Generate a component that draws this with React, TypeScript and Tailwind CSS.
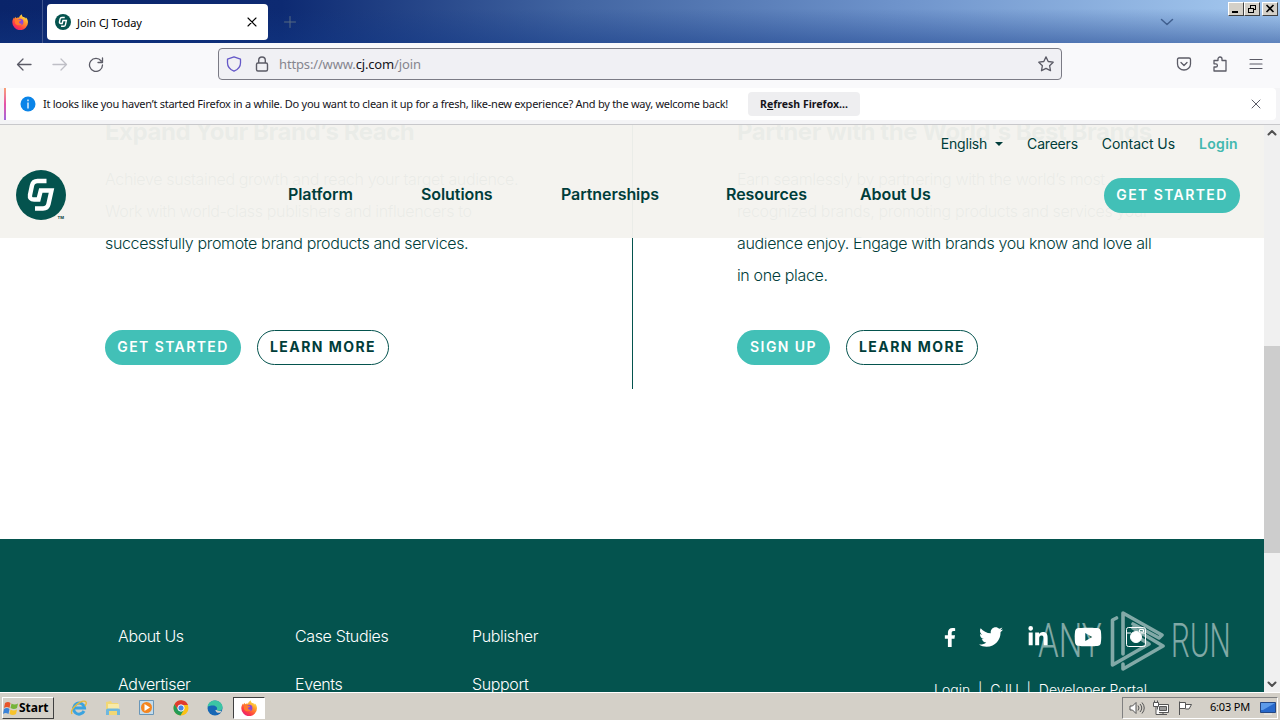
import * as React from 'react';
import { clsx } from 'clsx';
import { FaFacebookF, FaTwitter, FaLinkedinIn, FaYoutube } from 'react-icons/fa';

type IconProps = { className?: string };

const Firefox = ({ className }: IconProps) => (
	<svg viewBox="0 0 16 16" className={className}>
		<defs>
			<linearGradient id="fx-flame" x1="0.85" y1="0.05" x2="0.2" y2="1">
				<stop offset="0" stopColor="#fff04d" />
				<stop offset="0.35" stopColor="#ff9a2b" />
				<stop offset="0.7" stopColor="#ff4340" />
				<stop offset="1" stopColor="#e5177d" />
			</linearGradient>
		</defs>
		<path
			d="M10 0.3c-.4 1.2.2 2 1 2.8 1-.3 1.8.3 2.5 1.3.3-.4.3-.8.2-1.2C15.2 4.600 16 6.400 16 8.300A7.800 7.800 0 0 1 .3 8.300C.3 6.200 1 4.700 2 3.400l.2 1.300c.3-.8.8-1.500 1.500-2l.3 1.500c1-.7 2-.8 3-.5C7.300 2.300 8.400 1 10 .3z"
			fill="url(#fx-flame)"
		/>
		<circle cx="8.200" cy="8" r="3.200" fill="#8a48d8" />
		<path d="M3 5.500c1.700-1 3.500-.5 4.200.3 1 0 1.800.2 2 .7-.6.700-1.700.8-2.200 1.300-.2 1.700 1.700 2.500 3.200 1.600-1 2.600-6.300 2.600-7.200-.5z" fill="#ff7a2e" />
	</svg>
);

const CjLogo = ({ className }: IconProps) => (
	<svg viewBox="0 0 50 50" className={className}>
		<circle cx="25" cy="25" r="25" fill="#04534e" />
		<path
			d="M30.500 11H21.500Q17 11 16 15.500L14 25Q13.300 29.500 18 29.500H22.500L24.800 20.500H35.500L32.500 34Q31.500 38.500 27 38.500H19"
			fill="none"
			stroke="#fff"
			strokeWidth="4.400"
		/>
	</svg>
);

const Stroke = ({
	d,
	className,
	box = '0 0 16 16',
	width = 1.2,
}: {
	d: string;
	className?: string;
	box?: string;
	width?: number;
}) => (
	<svg viewBox={box} className={className} fill="none" stroke="currentColor" strokeWidth={width} strokeLinecap="round" strokeLinejoin="round">
		<path d={d} />
	</svg>
);

const CLOSE = 'M4 4l8 8M12 4l-8 8';

const WinButton = ({ children, className }: { children: React.ReactNode; className?: string }) => (
	<div
		className={clsx(
			'h-3.5 w-4 border border-t-white border-l-white border-r-[#404040] border-b-[#404040] bg-[#d4d0c8] text-black',
			className
		)}>
		<svg viewBox="0 0 14 12" className="block h-3 w-3.5" fill="none" stroke="currentColor" shapeRendering="crispEdges">
			{children}
		</svg>
	</div>
);

const TabStrip = () => (
	<div className="flex h-[43px] shrink-0 bg-[linear-gradient(to_bottom,#ffffff00_20%,#1238857a_100%),linear-gradient(to_right,#0a246a_0%,#0d2a72_22%,#4265a2_45%,#6e93cb_70%,#a6caf0_100%)]">
		<div className="flex w-[43px] items-center border-r border-[#40568f] pl-3">
			<Firefox className="size-4" />
		</div>
		<div className="mt-1 ml-1 flex h-9 w-[221px] items-center rounded bg-white pl-2">
			<CjLogo className="size-4" />
			<span className="ml-1.5 w-[167px] pt-0.5 text-[11px] tracking-[-0.05px] text-black">Join CJ Today</span>
			<Stroke d={CLOSE} className="size-4 text-black" width={1.1} />
		</div>
		<Stroke d="M8 2.500v11M2.500 8h11" className="mt-3.5 ml-3.5 size-4 text-[#566b82]" width={1} />
		<div className="grow" />
		<Stroke d="M2.500 5.500l5.500 5 5.500-5" className="mt-3.5 mr-[53px] size-4 text-[#405f8f]" width={1.5} />
		<div className="mt-0.5 mr-[2px] flex">
			<WinButton>
				<path d="M3 9h6" strokeWidth="2" />
			</WinButton>
			<WinButton>
				<path d="M5 2h6M5.500 2v3M10.500 2v5M8 6.500h3M3 5h6M3.500 5v5M8.500 5v5M3 9.500h6" />
			</WinButton>
			<WinButton className="ml-0.5">
				<path d="M3.500 2l7 7M10.500 2l-7 7" strokeWidth="1.600" shapeRendering="auto" />
			</WinButton>
		</div>
	</div>
);

const Toolbar = () => (
	<div className="flex h-[45px] shrink-0 items-center bg-[#f9f9fb] pb-[3px] text-[#5b5b66]">
		<Stroke d="M15 8.500H1.500M7 3L1.500 8.500 7 14" className="ml-4 size-4" width={1.3} />
		<Stroke d="M1 8.500h13.500M9 3l5.500 5.500L9 14" className="ml-5 size-4 text-[#bfbfc6]" width={1.3} />
		<Stroke d="M13.200 5A6.500 6.500 0 1 0 14.500 9M14.500 2v4.500H10" className="ml-5 size-4" width={1.3} />
		<div className="ml-[114px] flex h-8 w-[844px] items-center rounded border border-[#7b7b85] bg-[#f0f0f4] px-[7px]">
			<Stroke d="M8 .8L14.500 3.200V7c0 4-2.500 6.500-6.500 8.200C4 13.500 1.500 11 1.500 7V3.200z" className="size-4 text-[#6558c8]" width={1.3} />
			<svg viewBox="0 0 16 16" className="ml-3 size-4" fill="none" stroke="currentColor" strokeWidth="1.400">
				<rect x="2.500" y="7" width="11" height="8" rx="1.500" />
				<path d="M4.700 7V4.300a3.300 3.300 0 0 1 6.600 0V7" />
			</svg>
			<span className="ml-[9px] grow pt-0.5 text-[13px] tracking-[-0.15px] text-[#85858e]">
				https://www.<span className="text-[#15141a]">cj.com</span>/join
			</span>
			<Stroke d="M8 .9l2.200 4.600 5 .7-3.600 3.500.9 5L8 12.400l-4.500 2.300.9-5L.8 6.200l5-.7z" className="size-4" width={1.3} />
		</div>
		<Stroke d="M3 2h10q1.500 0 1.500 1.500V8a6.500 6 0 0 1-13 0V3.500Q1.500 2 3 2zM5 6.500l3 3 3-3" className="ml-[114px] size-4" width={1.3} />
		<Stroke
			d="M2 4.500h4V3a2 2 0 0 1 4 0v1.500h4V15H2v-4h1.800a1.600 1.600 0 0 0 0-3.200H2z"
			className="ml-5 size-4"
			width={1.3}
		/>
		<Stroke d="M2 3.500h12M2 8h12M2 12.500h12" className="ml-5 size-4" width={1.2} />
	</div>
);

const Notice = () => (
	<div className="h-9 shrink-0 bg-[#f4f4f6] px-1">
		<div className="flex h-8 items-center rounded-r bg-white text-[11px] text-[#15141a]">
			<div className="h-full w-0.5 bg-linear-to-b from-[#f9a074] via-[#e651a7] to-[#a164dc]" />
			<svg viewBox="0 0 16 16" className="ml-3.5 size-4">
				<circle cx="8" cy="8" r="7.500" fill="#0a84e8" />
				<path d="M8 3.500v1.700M8 6.500v6" stroke="#fff" strokeWidth="1.300" />
			</svg>
			<span className="ml-[7px] w-[705px] whitespace-nowrap tracking-[-0.26px]">
				It looks like you haven’t started Firefox in a while. Do you want to clean it up for a fresh, like-new experience? And by the way, welcome back!
			</span>
			<div className="flex h-6 w-28 items-center justify-center rounded bg-[#eeeef0] pt-px text-[10.500px] font-bold whitespace-nowrap">
				R<u>e</u>fresh Firefox...
			</div>
			<div className="grow" />
			<Stroke d={CLOSE} className="mr-3 size-4 text-[#5b5b66]" width={1} />
		</div>
	</div>
);

const Pill = ({ children, outline, className }: { children: string; outline?: boolean; className?: string }) => (
	<div
		className={clsx(
			'flex h-[35px] items-center justify-center rounded-full pb-0.5 text-[14px] whitespace-nowrap',
			outline
				? 'border border-[#04534e] font-bold tracking-[1.450px] text-[#003d3a]'
				: 'bg-[#42c0b7] font-semibold tracking-[1.400px] text-white',
			className
		)}>
		{children}
	</div>
);

const Card = ({ title, lines, children, className }: { title: string; lines: string[]; children: React.ReactNode; className?: string }) => (
	<div className={clsx('h-[264px]', className)}>
		<h2 className="-mt-1.5 h-11 text-[24px] leading-[26px] font-bold tracking-[-0.46px] whitespace-nowrap">{title}</h2>
		<div className="h-[167px] text-[16px] leading-8 font-light tracking-[-0.36px] whitespace-nowrap text-[#003d3a]">
			{lines.map(line => (
				<p key={line}>{line}</p>
			))}
		</div>
		<div className="flex gap-4">{children}</div>
	</div>
);

const SiteHeader = () => (
	<header className="absolute inset-x-0 top-0 flex h-[113px] bg-[#f4f2ee]/96 text-[#003d3a]">
		<div className="relative mt-[45px] ml-4 size-[50px]">
			<CjLogo className="size-full" />
			<span className="absolute right-0.5 bottom-0 text-[4px] leading-none font-bold">TM</span>
		</div>
		<nav className="mt-[59px] ml-[222px] flex w-[816px] text-[16px] leading-5 font-semibold tracking-[-0.08px] whitespace-nowrap">
			<span className="w-[133px]">Platform</span>
			<span className="w-[140px]">Solutions</span>
			<span className="w-[165px]">Partnerships</span>
			<span className="w-[134px]">Resources</span>
			<span>About Us</span>
		</nav>
		<div className="absolute top-[9px] right-[26px] flex items-center text-[14px] leading-5 whitespace-nowrap">
			<span className="tracking-[-0.2px]">English</span>
			<i className="mr-6 ml-2 border-x-4 border-t-4 border-x-transparent" />
			<span className="mr-6 tracking-[-0.2px]">Careers</span>
			<span className="mr-6 tracking-[-0.05px]">Contact Us</span>
			<span className="font-semibold tracking-[0.3px] text-[#42b8af]">Login</span>
		</div>
		<Pill className="mt-[53px] w-[136px]">GET STARTED</Pill>
	</header>
);

const links = [
	['About Us', 'Advertiser'],
	['Case Studies', 'Events'],
	['Publisher', 'Support'],
];

const Watermark = ({ className }: IconProps) => (
	<div className={clsx("flex items-center font-['Roboto',sans-serif] text-[48px] leading-none text-white/50", className)}>
		<span className="w-[71px] origin-left scale-x-[0.690]">ANY</span>
		<svg viewBox="0 0 56 64" className="h-16 w-14 shrink-0" fill="none" stroke="currentColor" strokeWidth="3.600" strokeLinecap="round" strokeLinejoin="round">
			<path d="M7.500 9L3.500 11V56L40 35 24 25M14 45V4L53 26 50 29 24 15M14 55V60L54 37 24 19" />
		</svg>
		<span className="ml-1.5 w-[60px] origin-left scale-x-[0.620]">RUN</span>
	</div>
);

const Footer = () => (
	<footer className="relative flex h-[153px] bg-[#04534e] pt-[81px] pl-[118px] font-light text-white">
		{links.map(col => (
			<div key={col[0]} className="w-[177px] text-[16px] leading-8 tracking-[-0.36px] whitespace-nowrap">
				{col.map(item => (
					<p key={item} className="mb-4">
						{item}
					</p>
				))}
			</div>
		))}
		<div className="ml-[285px] w-[213px]">
			<div className="mt-[5px] flex h-6 items-center">
				<FaFacebookF className="ml-2.5 h-[21px] w-3" />
				<FaTwitter className="ml-[23px] size-6" />
				<FaLinkedinIn className="ml-6 size-[22px]" />
				<FaYoutube className="ml-[25px] size-7" />
				<svg viewBox="0 0 20 20" className="ml-6 size-5" fill="none" stroke="currentColor">
					<rect x=".5" y=".5" width="19" height="19" rx="2" />
					<path d="M1 6h4M15 6h4M13.500 2.500h4v2.500h-4z" />
					<circle cx="10" cy="10" r="5.500" fill="currentColor" />
				</svg>
			</div>
			<p className="mt-[31px] text-[14px] leading-5 whitespace-pre">Login  |  CJU  |  Developer Portal</p>
		</div>
		<Watermark className="absolute top-[70px] left-[1038px]" />
	</footer>
);

const Scrollbar = () => (
	<div className="flex w-4 flex-col items-center justify-between bg-[#f0f0f0] text-[#505050]">
		<Stroke d="M4.500 9.500L8 6l3.500 3.500" className="size-4" width={2} />
		<div className="mt-[81px] h-[207px] w-full bg-[#cdcdcd]" />
		<Stroke d="M4.500 6.500L8 10l3.500-3.500" className="size-4" width={2} />
	</div>
);

const Taskbar = () => (
	<div className="flex h-7 shrink-0 items-center border-t border-white bg-[#d4d0c8] pt-0.5 text-[11px] text-black">
		<div className="ml-0.5 flex h-[22px] w-[52px] items-center border border-t-white border-l-white border-r-[#404040] border-b-[#404040] text-[12px] font-bold">
			<svg viewBox="0 0 16 16" className="size-4">
				<path d="M2 3q3-2 5.500 0L6.500 8Q4 6 1 8z" fill="#e8542a" />
				<path d="M8.500 3.500q3 2 6.500 0l-1 4.500q-3 2-6.500 0z" fill="#75b43a" />
				<path d="M1 9q3-2 5.500 0l-1 5q-3-2-5.500 0z" fill="#3a82d8" />
				<path d="M7.500 9.500q3 2 6.500 0l-1 4.500q-3 2-6.500 0z" fill="#f8c32c" />
			</svg>
			Start
		</div>
		<svg viewBox="0 0 18 18" className="ml-4 size-[18px]" fill="none">
			<path d="M14 12a5.500 5.500 0 1 1 .5-3H5" stroke="#3ba3df" strokeWidth="3" />
			<path d="M2 15C-1 10 13-1 16 3q1 1.500-1 4" stroke="#e6b93b" strokeWidth="1.300" />
		</svg>
		<svg viewBox="0 0 18 18" className="ml-4 size-[18px]">
			<path d="M2 3l5-1 1 2h6v12H2z" fill="#f1d775" />
			<path d="M4 5h11v7H4z" fill="#f8eaa8" />
			<path d="M2 16v-5q0-1.500 2-1.500h10q2 0 2 1.500v5h-3v-4H5v4z" fill="#6fb8df" />
		</svg>
		<svg viewBox="0 0 18 18" className="ml-4 size-[18px]">
			<path d="M1.500 1.500h14v14h-14z" fill="#c4dcec" stroke="#6996b8" />
			<circle cx="8.500" cy="8.500" r="5.500" fill="#f48620" />
			<path d="M6.500 5l5.500 3.500L6.500 12z" fill="#fff" />
		</svg>
		<svg viewBox="0 0 18 18" className="ml-4 size-[18px]">
			<circle cx="9" cy="9" r="7.500" fill="#fbc116" />
			<path d="M2.500 5.200A7.500 7.500 0 0 1 16 6H9l-3.400 5z" fill="#df3b2f" />
			<path d="M2.500 5.200A7.500 7.500 0 0 0 8.500 16.500L11.800 11H6z" fill="#239b56" />
			<circle cx="9" cy="9" r="3.200" fill="#4285e8" stroke="#fff" />
		</svg>
		<svg viewBox="0 0 18 18" className="ml-4 size-[18px]">
			<circle cx="9" cy="9" r="7.500" fill="#1767b5" />
			<path d="M1.500 8C2 3 6 1.500 9 1.500c5 0 8 4 7.500 7.500-.5 3-4.500 3.500-6 2 2-2-1-5-4-4.500-2 0-4 .5-5 1.500z" fill="#3cc5a4" />
			<path d="M10.500 11q2.500 1.700 5 .7l-1.200 2q-4 .8-5-2.700z" fill="#d4d0c8" />
		</svg>
		<div className="ml-[9px] flex h-[22px] w-8 items-center justify-center border border-t-[#404040] border-l-[#404040] border-r-white border-b-white bg-white">
			<Firefox className="size-4" />
		</div>
		<div className="grow" />
		<div className="mr-0.5 flex h-[22px] w-[156px] items-center border border-t-[#808080] border-l-[#808080] border-r-white border-b-white pl-1.5 text-[#555]">
			<svg viewBox="0 0 16 16" className="size-4" fill="#fff" stroke="currentColor">
				<path d="M1 6h2.500L7 2.500v11L3.500 10H1z" />
				<path d="M9 5.500q2 2.500 0 5M11 4q3.500 4 0 8M13 2.500q4.500 5.500 0 11" fill="none" />
			</svg>
			<svg viewBox="0 0 16 16" className="ml-2 size-4" fill="#fff" stroke="currentColor">
				<path d="M4.500 4.500h11v8h-11z" />
				<path d="M6.500 6.500h7v4h-7z" fill="#999" />
				<path d="M7 14.500h7M10 12.500v2M.5 2.500h5v4h-5zM3 6.500v8h4M1.500.5v2M4.500.5v2" />
			</svg>
			<svg viewBox="0 0 16 16" className="ml-2 size-4" fill="#fff" stroke="currentColor">
				<path d="M2.500 15V1.500M2.500 2.500h6v6h-6M8.500 4.500h6L12 9H8.500" />
			</svg>
			<span className="ml-[17px] w-[50px] tracking-[-0.2px] whitespace-nowrap text-black">6:03 PM</span>
			<svg viewBox="0 0 16 16" className="size-4 shrink-0">
				<path d="M.5 2.500h15v10H.5z" fill="#2768ca" stroke="#234784" />
				<path d="M1 3h14L3 10H1z" fill="#5d9be8" />
				<path d="M4 14h8" stroke="#eee" />
			</svg>
		</div>
	</div>
);

export default function App() {
	return (
		<div className="flex h-[720px] w-[1280px] flex-col overflow-hidden bg-white font-['Noto_Sans',sans-serif]">
			<TabStrip />
			<Toolbar />
			<Notice />
			<div className="flex h-[568px] shrink-0 border-t border-[#c8c8cb]">
				<main className="relative w-[1264px] overflow-hidden font-['Inter',sans-serif] text-[#04534e]">
					<div className="flex h-[414px]">
						<Card
							className="w-[633px] border-r border-[#04534e] pl-[105px]"
							title="Expand Your Brand’s Reach"
							lines={[
								'Achieve sustained growth and reach your target audience.',
								'Work with world-class publishers and influencers to',
								'successfully promote brand products and services.',
							]}>
							<Pill className="w-[136px]">GET STARTED</Pill>
							<Pill outline className="w-[132px]">LEARN MORE</Pill>
						</Card>
						<Card
							className="w-[631px] pl-[104px]"
							title="Partner with the World's Best Brands"
							lines={[
								'Earn seamlessly by partnering with the world’s most',
								'recognized brands, promoting products and services your',
								'audience enjoy. Engage with brands you know and love all',
								'in one place.',
							]}>
							<Pill className="w-[93px]">SIGN UP</Pill>
							<Pill outline className="w-[132px]">LEARN MORE</Pill>
						</Card>
					</div>
					<Footer />
					<SiteHeader />
				</main>
				<Scrollbar />
			</div>
			<Taskbar />
		</div>
	);
}
